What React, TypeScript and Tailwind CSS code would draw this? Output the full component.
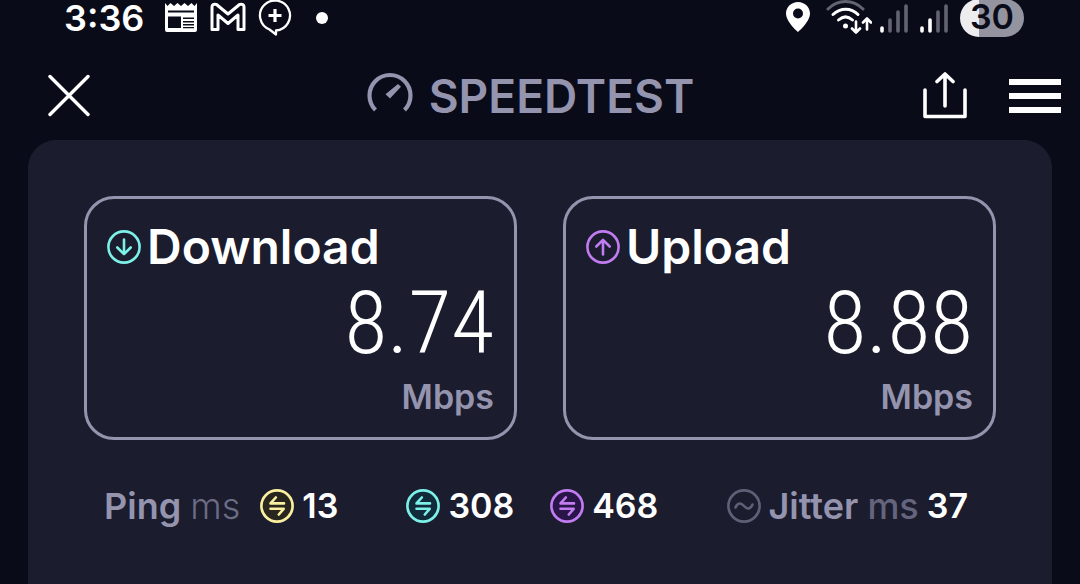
import type { ReactNode } from 'react';

const TONES = {
  teal: { line: '#7df0e8', fill: '#112b3a' },
  purple: { line: '#c07cf0', fill: '#2a1548' },
  yellow: { line: '#fbf0a0', fill: '#29261f' },
  muted: { line: '#5f5f77', fill: 'none' },
};

type Tone = keyof typeof TONES;

function Ring({ tone, filled = false, children }: { tone: Tone; filled?: boolean; children: ReactNode }) {
  return (
    <svg
      className="size-[34px] shrink-0"
      viewBox="0 0 34 34"
      fill="none"
      stroke={TONES[tone].line}
      strokeWidth="2.6"
      strokeLinecap="round"
      strokeLinejoin="round"
      aria-hidden="true"
    >
      <circle cx="17" cy="17" r="15.6" fill={filled ? TONES[tone].fill : 'none'} />
      {children}
    </svg>
  );
}

const DownArrow = () => <path d="M17 9.5v14.5M10.3 17.5l6.7 6.7l6.7-6.7" />;
const UpArrow = () => <path d="M17 24.5V10M10.3 16.5l6.7-6.7l6.7 6.7" />;
const Swap = () => <path d="M24 14.4H10.500L15.800 8.500M10.500 19.800H23.700L18.800 25.500" />;
const Wave = () => <path d="M8.5 18.5c2-5 5.5-5 8.5-1.5s6.5 3.5 8.5-1.5" />;

function SignalBars({ active }: { active: number }) {
  return (
    <svg className="h-8 w-7" viewBox="0 0 28 32" strokeWidth="3.6" strokeLinecap="round" aria-hidden="true">
      {[25, 17, 9, 3].map((top, i) => (
        <path key={top} d={`M${2 + i * 8} ${top + 1}V29`} stroke={i < active ? '#fff' : '#636472'} />
      ))}
    </svg>
  );
}

function StatusBar() {
  return (
    <div className="flex h-9 items-center justify-between pr-14 pl-16">
      <div className="flex items-center">
        <span className="text-[36px] leading-8 font-semibold">3:36</span>
        <svg className="ml-5 h-8 w-[34px]" viewBox="0 0 34 32" aria-hidden="true">
          <path fill="#fff" d="M1 1l2.5 3l3-3l3.5 3l3.5-3l3.500 3l3.500-3l3.500 3l3.500-3l3 3l2.500-3v27q0 2-2 2H3q-2 0-2-2z" />
          <path fill="#0a0c1a" d="M4 8.500h26v2H4zM4 14.500h13V26H4zM19 15.500h11v1.500H19zM19 19h11v1.500H19zM19 22h11v1.500H19zM19 25h11v1.300H19z" />
        </svg>
        <svg className="ml-3 h-8 w-9" viewBox="0 0 36 32" fill="none" stroke="#fff" strokeWidth="3" strokeLinejoin="round" aria-hidden="true">
          <path d="M2 27.500V5q0-3.500 4.500-2.500L18 12L29.500 2.500Q34 1.500 34 5v22.500h-6V13L18 21.500L8 13v14.500z" />
        </svg>
        <svg className="ml-3 h-9 w-[34px]" viewBox="0 0 34 36" fill="none" stroke="#fff" aria-hidden="true">
          <path strokeWidth="2.3" strokeLinejoin="round" d="M11.500 29.500A15 15 0 1 1 18 30.500V34.500z" />
          <path strokeWidth="3.2" d="M17 9v13M10.500 15.500h13" />
        </svg>
        <span className="ml-6 size-3 rounded-full bg-white" />
      </div>
      <div className="flex items-center">
        <svg className="h-8 w-6" viewBox="0 0 24 32" aria-hidden="true">
          <path fill="#fff" fillRule="evenodd" d="M12 0C5.500 0 0 5 0 11.500C0 20 12 30 12 30S24 20 24 11.500C24 5 18.500 0 12 0zM12 6.500a5 5 0 1 1 0 10a5 5 0 1 1 0-10z" />
        </svg>
        <svg className="ml-4 h-9 w-[46px]" viewBox="0 0 46 36" fill="none" stroke="#fff" strokeWidth="3" strokeLinecap="round" aria-hidden="true">
          <path stroke="#636472" d="M2 9C12-1 27-1 37 9" />
          <path d="M7 14.500C14.500 7.500 25 7.500 32 14.500M12.500 20c4.500-4 9.500-4 14 0" />
          <circle cx="19.500" cy="26" r="2.500" fill="#fff" stroke="none" />
          <path strokeWidth="2.6" strokeLinejoin="round" d="M30 21.500V32M26 28.500l4 4l4-4M41 29.500V19M37 22.500l4-4l4 4" />
        </svg>
        <span className="ml-2 flex gap-3">
          <SignalBars active={1} />
          <SignalBars active={2} />
        </span>
        <span className="ml-3 h-[38px] w-16 rounded-full bg-linear-to-r from-[#ededf0] from-30% to-[#9494a0] to-30% text-center text-[34px] leading-[36px] font-semibold text-[#0a0c1a]">
          30
        </span>
      </div>
    </div>
  );
}

function Header() {
  return (
    <header className="flex items-center pt-9 pr-[19px] pb-5 pl-12">
      <button type="button" aria-label="Close">
        <svg className="h-12 w-[42px]" viewBox="0 0 42 48" stroke="#fff" strokeWidth="3.4" strokeLinecap="round">
          <path d="M2 4.500l38 38M40 4.500l-38 38" />
        </svg>
      </button>
      <div className="flex flex-1 items-center justify-center gap-4 pl-12 text-[#9494ae]">
        <svg className="h-12 w-[46px]" viewBox="0 0 46 48" fill="none" stroke="currentColor" strokeWidth="4.2" aria-hidden="true">
          <path d="M8.500 38A20.500 20.500 0 1 1 37.500 38" />
          <path fill="currentColor" stroke="none" d="M31 12l3 2.800L23 26.500l-4.500-4.200z" />
        </svg>
        <h1 className="text-[46px] leading-12 font-semibold">SPEEDTEST</h1>
      </div>
      <div className="flex items-center gap-[42px]">
        <button type="button" aria-label="Share">
          <svg className="h-12 w-11" viewBox="0 0 44 48" fill="none" stroke="#fff" strokeWidth="3.6" strokeLinecap="round" strokeLinejoin="round">
            <path d="M2 18v26.500h40V18M22 34V3M14 9.500l8-7.500l8 7.500" />
          </svg>
        </button>
        <button type="button" aria-label="Menu" className="flex w-[52px] flex-col gap-2">
          <span className="h-1.5 bg-white" />
          <span className="h-1.5 bg-white" />
          <span className="h-1.5 bg-white" />
        </button>
      </div>
    </header>
  );
}

function SpeedCard({ title, value, icon }: { title: string; value: string; icon: ReactNode }) {
  return (
    <section className="flex-1 rounded-[30px] border-3 border-[#9494ae] p-5">
      <h2 className="flex h-14 items-center gap-1.5 text-[48px] font-semibold">
        {icon}
        {title}
      </h2>
      <p className="mt-2 text-right font-['Noto_Sans_ExtraCondensed','Roboto_Condensed','Liberation_Sans_Narrow',Roboto,sans-serif] text-[88px] leading-20 font-light">
        {value}
      </p>
      <p className="mt-3.5 text-right text-[34px] leading-10 font-semibold text-[#9494ae]">Mbps</p>
    </section>
  );
}

function Latency({ tone, value }: { tone: Tone; value: string }) {
  return (
    <span className="flex items-center gap-2">
      <Ring tone={tone} filled><Swap /></Ring>
      {value}
    </span>
  );
}

export default function App() {
  return (
    <div className="flex min-h-screen flex-col overflow-hidden bg-[#090b19] font-[Inter,sans-serif] text-white">
      <StatusBar />
      <Header />
      <main className="mx-7 flex-1 rounded-t-[28px] bg-[#1b1c2e] p-14 pb-0">
        <div className="flex gap-[46px]">
          <SpeedCard title="Download" value="8.74" icon={<Ring tone="teal"><DownArrow /></Ring>} />
          <SpeedCard title="Upload" value="8.88" icon={<Ring tone="purple"><UpArrow /></Ring>} />
        </div>
        <div className="mt-[46px] flex justify-between pr-7 pl-5 text-[34px] leading-10 font-semibold">
          <div className="flex items-center gap-5">
            <span className="text-[36px] text-[#9494ae]">
              Ping <span className="font-light text-[#6c6c84]">ms</span>
            </span>
            <Latency tone="yellow" value="13" />
          </div>
          <div className="flex gap-9">
            <Latency tone="teal" value="308" />
            <Latency tone="purple" value="468" />
          </div>
          <div className="flex items-center gap-2">
            <Ring tone="muted"><Wave /></Ring>
            <span className="text-[36px] text-[#9494ae]">
              Jitter <span className="font-medium text-[#64647c]">ms</span>
            </span>
            <span>37</span>
          </div>
        </div>
      </main>
    </div>
  );
}
